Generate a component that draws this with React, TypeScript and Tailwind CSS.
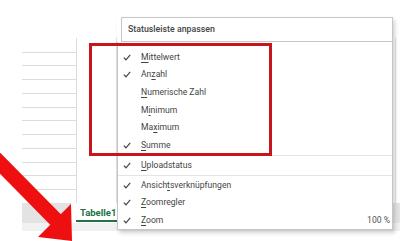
import React from 'react';

type Item = { pre: string; key: string; post: string; checked: boolean; value?: string };

const groups: Item[][] = [
	[
		{ pre: '', key: 'M', post: 'ittelwert', checked: true },
		{ pre: 'An', key: 'z', post: 'ahl', checked: true },
		{ pre: '', key: 'N', post: 'umerische Zahl', checked: false },
		{ pre: 'M', key: 'i', post: 'nimum', checked: false },
		{ pre: 'Ma', key: 'x', post: 'imum', checked: false },
		{ pre: '', key: 'S', post: 'umme', checked: true },
	],
	[{ pre: '', key: 'U', post: 'ploadstatus', checked: true }],
	[
		{ pre: 'Ansich', key: 't', post: 'sverknüpfungen', checked: true },
		{ pre: '', key: 'Z', post: 'oomregler', checked: true },
		{ pre: '', key: 'Z', post: 'oom', checked: true, value: '100 %' },
	],
];

const rows = Array.from({ length: 11 });

function Check() {
	return (
		<svg width="8" height="7" viewBox="0 0 8 7" fill="none">
			<path d="M0.8 3.6 L3 5.8 L7.2 0.9" stroke="#4a4a4a" strokeWidth="1.3" />
		</svg>
	);
}

function MenuRow({ item }: { item: Item }) {
	return (
		<div className="flex h-[17.6px] items-center pr-[2px]">
			<div className="flex w-[23px] pl-[5px]">{item.checked && <Check />}</div>
			<div className="flex-1 text-[8.6px] text-[#444]">
				{item.pre}
				<span className="underline decoration-[0.6px] underline-offset-[1.5px]">{item.key}</span>
				{item.post}
			</div>
			{item.value && <div className="text-[8.6px] text-[#555]">{item.value}</div>}
		</div>
	);
}

export default function App() {
	return (
		<div className="relative h-[241px] w-[400px] overflow-hidden bg-white font-['Roboto',sans-serif]">
			{/* sheet underneath */}
			<div className="flex h-full flex-col">
				<div className="h-[38px]" />
				<div className="flex h-[165px]">
					<div className="w-[22px]" />
					<div className="flex w-[55px] flex-col border-r border-[#dcdcdc]">
						<div className="h-[14px]" />
						{rows.map((_, i) => (
							<div key={i} className="h-[14px] border-t border-[#dcdcdc]" />
						))}
					</div>
					<div className="w-[40px] border-r border-[#e2e2e2]" />
					<div className="flex-1" />
					<div className="w-[5px] border-l border-[#e2e2e2]" />
				</div>
				<div className="flex h-[20px]">
					<div className="w-[22px]" />
					<div className="w-[48px] bg-[#e3e3e3]" />
					<div className="flex w-[60px] flex-col border-l border-[#c8c8c8] bg-white pl-[9px]">
						<div className="flex-1 pt-[3px] text-[9.5px] font-bold text-[#217346]">Tabelle1</div>
						<div className="mb-[1px] ml-[-4px] h-[2px] bg-[#217346]" />
					</div>
					<div className="flex-1 bg-[#e3e3e3]" />
				</div>
				<div className="ml-[22px] h-[8px] bg-[#f1f1f1]" />
				<div className="flex-1" />
			</div>

			{/* context menu */}
			<div className="absolute left-[117px] top-[17px] flex w-[276px] flex-col shadow-[2px_3px_4px_rgba(0,0,0,0.18)]">
				<div className="ml-[4px] flex h-[25px] items-center border border-[#c6c6c6] bg-white pl-[6px] text-[8.8px] font-medium text-[#444]">
					Statusleiste anpassen
				</div>
				<div className="flex flex-col border border-t-0 border-[#c6c6c6] bg-white pt-[6.5px]">
					{groups.map((g, gi) => (
						<div key={gi} className={gi > 0 ? 'mt-[0.7px] border-t border-[#e3e3e3] pt-[0.7px]' : ''}>
							{g.map((item) => (
								<MenuRow key={item.pre + item.key + item.post} item={item} />
							))}
						</div>
					))}
				</div>
			</div>

			{/* highlight box */}
			<div className="absolute left-[89px] top-[43px] h-[113px] w-[183px] border-[3px] border-[#c8141c]" />

			{/* arrow */}
			<svg className="absolute left-0 top-0" width="400" height="241" viewBox="0 0 400 241">
				<line x1="-6" y1="157" x2="56" y2="220" stroke="#ee1010" strokeWidth="15" />
				<polygon points="38,237 71,204 72,241" fill="#ee1010" />
			</svg>
		</div>
	);
}
